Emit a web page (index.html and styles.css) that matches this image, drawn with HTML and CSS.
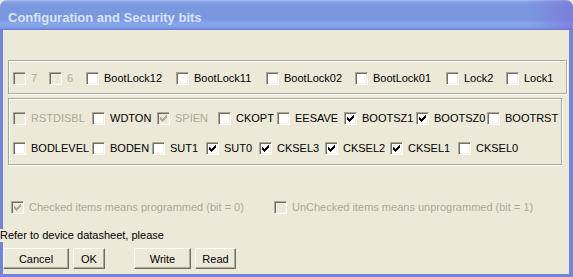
FILE: index.html
```html
<!DOCTYPE html>
<html lang="en">
<head>
    <meta charset="UTF-8">
    <title>Configuration and Security bits</title>
    <link rel="stylesheet" href="styles.css">
</head>
<body>

    <div class="window">
        <div class="titlebar">Configuration and Security bits</div>

        <div class="client">
            <!-- Lock bits -->
            <div class="group group-lock">
                <div class="row row-lock">
                    <label class="item disabled"><span class="cb"></span>7</label>
                    <label class="item disabled"><span class="cb"></span>6</label>
                    <label class="item"><span class="cb"></span>BootLock12</label>
                    <label class="item"><span class="cb"></span>BootLock11</label>
                    <label class="item"><span class="cb"></span>BootLock02</label>
                    <label class="item"><span class="cb"></span>BootLock01</label>
                    <label class="item"><span class="cb"></span>Lock2</label>
                    <label class="item"><span class="cb"></span>Lock1</label>
                </div>
            </div>

            <!-- Fuse bits -->
            <div class="group group-fuse">
                <div class="row row-fuse-high">
                    <label class="item disabled"><span class="cb"></span>RSTDISBL</label>
                    <label class="item"><span class="cb"></span>WDTON</label>
                    <label class="item disabled"><span class="cb"><svg viewBox="0 0 7 7"><path d="M0 2h1v3H0zM1 3h1v3H1zM2 4h1v3H2zM3 3h1v3H3zM4 2h1v3H4zM5 1h1v3H5zM6 0h1v3H6z"/></svg></span>SPIEN</label>
                    <label class="item"><span class="cb"></span>CKOPT</label>
                    <label class="item"><span class="cb"></span>EESAVE</label>
                    <label class="item"><span class="cb"><svg viewBox="0 0 7 7"><path d="M0 2h1v3H0zM1 3h1v3H1zM2 4h1v3H2zM3 3h1v3H3zM4 2h1v3H4zM5 1h1v3H5zM6 0h1v3H6z"/></svg></span>BOOTSZ1</label>
                    <label class="item"><span class="cb"><svg viewBox="0 0 7 7"><path d="M0 2h1v3H0zM1 3h1v3H1zM2 4h1v3H2zM3 3h1v3H3zM4 2h1v3H4zM5 1h1v3H5zM6 0h1v3H6z"/></svg></span>BOOTSZ0</label>
                    <label class="item"><span class="cb"></span>BOOTRST</label>
                </div>
                <div class="row row-fuse-low">
                    <label class="item"><span class="cb"></span>BODLEVEL</label>
                    <label class="item"><span class="cb"></span>BODEN</label>
                    <label class="item"><span class="cb"></span>SUT1</label>
                    <label class="item"><span class="cb"><svg viewBox="0 0 7 7"><path d="M0 2h1v3H0zM1 3h1v3H1zM2 4h1v3H2zM3 3h1v3H3zM4 2h1v3H4zM5 1h1v3H5zM6 0h1v3H6z"/></svg></span>SUT0</label>
                    <label class="item"><span class="cb"><svg viewBox="0 0 7 7"><path d="M0 2h1v3H0zM1 3h1v3H1zM2 4h1v3H2zM3 3h1v3H3zM4 2h1v3H4zM5 1h1v3H5zM6 0h1v3H6z"/></svg></span>CKSEL3</label>
                    <label class="item"><span class="cb"><svg viewBox="0 0 7 7"><path d="M0 2h1v3H0zM1 3h1v3H1zM2 4h1v3H2zM3 3h1v3H3zM4 2h1v3H4zM5 1h1v3H5zM6 0h1v3H6z"/></svg></span>CKSEL2</label>
                    <label class="item"><span class="cb"><svg viewBox="0 0 7 7"><path d="M0 2h1v3H0zM1 3h1v3H1zM2 4h1v3H2zM3 3h1v3H3zM4 2h1v3H4zM5 1h1v3H5zM6 0h1v3H6z"/></svg></span>CKSEL1</label>
                    <label class="item"><span class="cb"></span>CKSEL0</label>
                </div>
            </div>

            <!-- Legend -->
            <div class="legend">
                <label class="item disabled"><span class="cb"><svg viewBox="0 0 7 7"><path d="M0 2h1v3H0zM1 3h1v3H1zM2 4h1v3H2zM3 3h1v3H3zM4 2h1v3H4zM5 1h1v3H5zM6 0h1v3H6z"/></svg></span>Checked items means programmed (bit = 0)</label>
                <label class="item disabled"><span class="cb"></span>UnChecked items means unprogrammed (bit = 1)</label>
            </div>

            <div class="note">Refer to device datasheet, please</div>

            <div class="buttons">
                <button class="btn btn-cancel">Cancel</button>
                <button class="btn btn-ok">OK</button>
                <button class="btn btn-write">Write</button>
                <button class="btn btn-read">Read</button>
            </div>
        </div>
    </div>

</body>
</html>
```

FILE: styles.css
```css
body {
    margin: 0;
    background-color: #ece9d8;
    font-family: 'Liberation Sans', Arial, sans-serif;
    font-size: 11px;
    color: #000;
}
.window {
    width: 573px;
    height: 277px;
    display: flex;
    flex-direction: column;
}
.titlebar {
    height: 30px;
    box-sizing: border-box;
    padding: 10px 0 0 8px;
    border-radius: 7px 7px 0 0;
    background:
        linear-gradient(to right, rgba(120, 110, 215, 0) 92%, rgba(120, 110, 215, 0.6) 100%),
        linear-gradient(to bottom, #b4c4f0 0, #8fa9e8 1px, #7c98e0 4px, #7a96df 19px, #88a8ec 24px, #7d9de3 28px, #6f82d8 29px);
    color: #d8e4f8;
    font-weight: bold;
    font-size: 13px;
    line-height: 15px;
}
.client {
    flex: 1;
    background-color: #ece9d8;
    border-left: 3px solid #7186d9;
    border-right: 4px solid #7186d9;
    border-bottom: 3px solid #7186d9;
    padding-top: 30px;
}
.group {
    margin-left: 5px;
    border: 1px solid #aca899;
    box-shadow: 1px 1px 0 #fff, inset 1px 1px 0 #fff;
}
.group-lock {
    width: 559px;
    box-sizing: border-box;
    padding: 11px 0 8px 4px;
}
.group-fuse {
    width: 554px;
    box-sizing: border-box;
    margin-top: 4px;
    padding: 13px 0 9px 4px;
    display: flex;
    flex-direction: column;
    gap: 17px;
}
.row {
    display: grid;
}
.row-lock {
    grid-template-columns: 36px 37px 90px 90px 89px 91px 60px auto;
}
.row-fuse-high {
    grid-template-columns: 79px 65px 61px 59px 67px 72px 71px auto;
}
.row-fuse-low {
    grid-template-columns: 79px 60px 54px 53px 66px 65px 68px auto;
}
.item {
    display: flex;
    align-items: center;
    gap: 5px;
    height: 13px;
    line-height: 13px;
    white-space: nowrap;
}
.item.disabled {
    color: #aca899;
}
.cb {
    width: 13px;
    height: 13px;
    box-sizing: border-box;
    flex-shrink: 0;
    background-color: #fff;
    border: 1px solid;
    border-color: #aca899 #fff #fff #aca899;
    box-shadow: inset 1px 1px 0 #716f64, inset -1px -1px 0 #f1efe2;
    display: flex;
    align-items: center;
    justify-content: center;
}
.disabled .cb {
    background-color: #ece9d8;
}
.cb svg {
    width: 7px;
    height: 7px;
    fill: #000;
    shape-rendering: crispEdges;
}
.disabled .cb svg {
    fill: #aca899;
}
.legend {
    margin-top: 36px;
    margin-left: 8px;
    display: grid;
    grid-template-columns: 263px auto;
}
.note {
    margin: 15px 0 0 -3px;
    width: 180px;
    height: 13px;
    line-height: 13px;
    background-color: #ece9d8;
    position: relative;
}
.buttons {
    margin-top: 6px;
    display: flex;
}
.btn {
    height: 21px;
    padding: 0;
    margin: 0;
    font-family: inherit;
    font-size: 11px;
    color: #000;
    background-color: #ece9d8;
    border: 1px solid;
    border-color: #fff #716f64 #716f64 #fff;
    box-shadow: inset -1px -1px 0 #aca899;
}
.btn-cancel {
    width: 66px;
}
.btn-ok {
    width: 32px;
    margin-left: 4px;
}
.btn-write {
    width: 57px;
    margin-left: 29px;
}
.btn-read {
    width: 41px;
    margin-left: 4px;
}
```
